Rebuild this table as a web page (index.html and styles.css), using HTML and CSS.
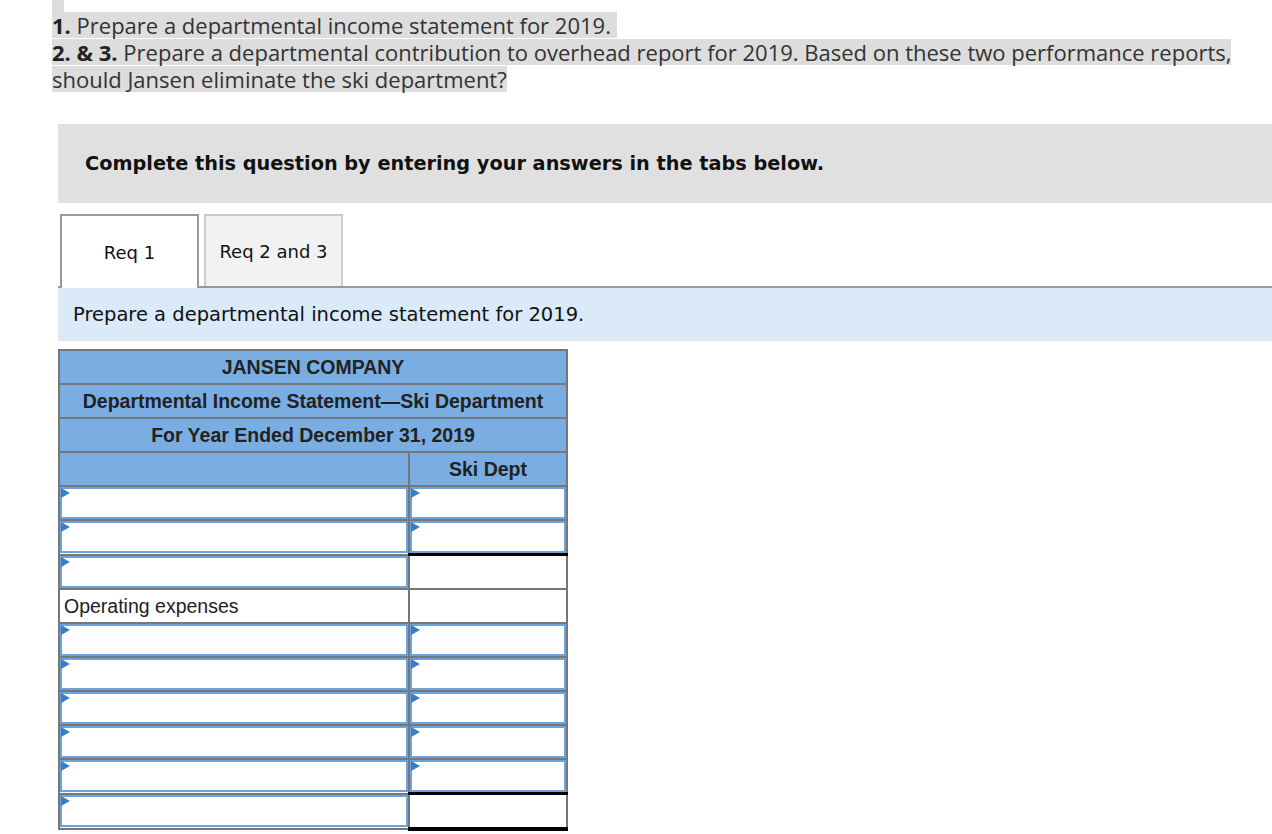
FILE: index.html
```html
<!DOCTYPE html>
<html lang="en">
<head>
<meta charset="utf-8">
<title>Departmental income statement</title>
<link rel="stylesheet" href="styles.css">
</head>
<body>
<div class="prompt">
  <span class="stub"></span>
  <p class="q"><span class="hl"><b>1.</b> Prepare a departmental income statement for 2019.&nbsp;</span><br><span class="hl"><b>2. &amp; 3.</b> Prepare a departmental contribution to overhead report for 2019. Based on these two performance reports, should Jansen eliminate the ski department?</span></p>
</div>

<div class="panel">
  <div class="instr">Complete this question by entering your answers in the tabs below.</div>

  <div class="tabs">
    <div class="tab active">Req 1</div>
    <div class="tab">Req 2 and 3</div>
  </div>

  <div class="bar">Prepare a departmental income statement for 2019.</div>

  <table class="stmt">
    <colgroup><col class="c1"><col class="c2"></colgroup>
    <tr><th colspan="2">JANSEN COMPANY</th></tr>
    <tr><th colspan="2">Departmental Income Statement—Ski Department</th></tr>
    <tr><th colspan="2">For Year Ended December 31, 2019</th></tr>
    <tr><th></th><th>Ski Dept</th></tr>
    <tr><td><div class="inp"></div></td><td><div class="inp"></div></td></tr>
    <tr><td><div class="inp"></div></td><td><div class="inp"></div></td></tr>
    <tr><td><div class="inp"></div></td><td class="ul"></td></tr>
    <tr><td class="label">Operating expenses</td><td></td></tr>
    <tr><td><div class="inp"></div></td><td><div class="inp"></div></td></tr>
    <tr><td><div class="inp"></div></td><td><div class="inp"></div></td></tr>
    <tr><td><div class="inp"></div></td><td><div class="inp"></div></td></tr>
    <tr><td><div class="inp"></div></td><td><div class="inp"></div></td></tr>
    <tr><td><div class="inp"></div></td><td><div class="inp"></div></td></tr>
    <tr><td><div class="inp"></div></td><td class="ul dbl"></td></tr>
  </table>
</div>
</body>
</html>
```

FILE: styles.css
```css
html, body {
  margin: 0;
  padding: 0;
  background: #fff;
}

.prompt {
  padding-left: 52px;
  width: 1206px;
}

.stub {
  display: block;
  width: 12px;
  height: 12px;
  background: #dddddd;
}

.q {
  margin: 0;
  font-family: "Open Sans", "Liberation Sans", sans-serif;
  font-size: 22px;
  line-height: 27px;
  color: #333;
}

.q b {
  color: #222;
}

.hl {
  background: linear-gradient(#dddddd, #dddddd) 0 50% / 100% 26px no-repeat;
  -webkit-box-decoration-break: clone;
  box-decoration-break: clone;
}

.panel {
  margin: 31px 0 0 58px;
}

.instr {
  background: #e0e0e0;
  height: 79px;
  display: flex;
  align-items: center;
  padding-left: 27px;
  font-family: "DejaVu Sans", Verdana, sans-serif;
  font-weight: bold;
  font-size: 19.3px;
  color: #111;
}

.tabs {
  display: flex;
  align-items: flex-start;
  gap: 5px;
  margin-top: 11px;
  padding-left: 2px;
  height: 72px;
  border-bottom: 2px solid #999;
}

.tab {
  box-sizing: border-box;
  width: 139px;
  height: 72px;
  display: flex;
  align-items: center;
  justify-content: center;
  font-family: "DejaVu Sans", Verdana, sans-serif;
  font-size: 18px;
  color: #111;
  background: #f2f2f2;
  border: 2px solid #cccccc;
  border-bottom: none;
}

.tab.active {
  height: 74px;
  margin-bottom: -2px;
  background: #fff;
  border-color: #999;
}

.bar {
  background: #dbeaf8;
  height: 53px;
  display: flex;
  align-items: center;
  padding-left: 15px;
  font-family: "DejaVu Sans", Verdana, sans-serif;
  font-size: 19.5px;
  color: #111;
}

.stmt {
  margin-top: 8px;
  width: 508px;
  border-collapse: collapse;
  table-layout: fixed;
  border: 2px solid #777;
  font-family: "Liberation Sans", Arial, sans-serif;
  font-size: 19.5px;
  color: #222;
}

.c1 { width: 350px; }
.c2 { width: 158px; }

.stmt th,
.stmt td {
  border: 2px solid #777;
  padding: 0;
  height: 32px;
}

.stmt th {
  background: #7aade2;
  font-weight: bold;
  text-align: center;
}

.stmt td {
  background: #fff;
}

.stmt td.label {
  padding-left: 4px;
  font-weight: normal;
}

.stmt td.ul {
  border-top: 3px solid #000;
}

.stmt td.ul.dbl {
  border-bottom: 4px solid #000;
}

.inp {
  position: relative;
  box-sizing: border-box;
  height: 32px;
  border: 2px solid #6ea2dc;
  background: #fff;
}

.inp::before {
  content: "";
  position: absolute;
  top: -1px;
  left: -1px;
  border-left: 9px solid #3b7dc4;
  border-top: 5px solid transparent;
  border-bottom: 5px solid transparent;
}
```
